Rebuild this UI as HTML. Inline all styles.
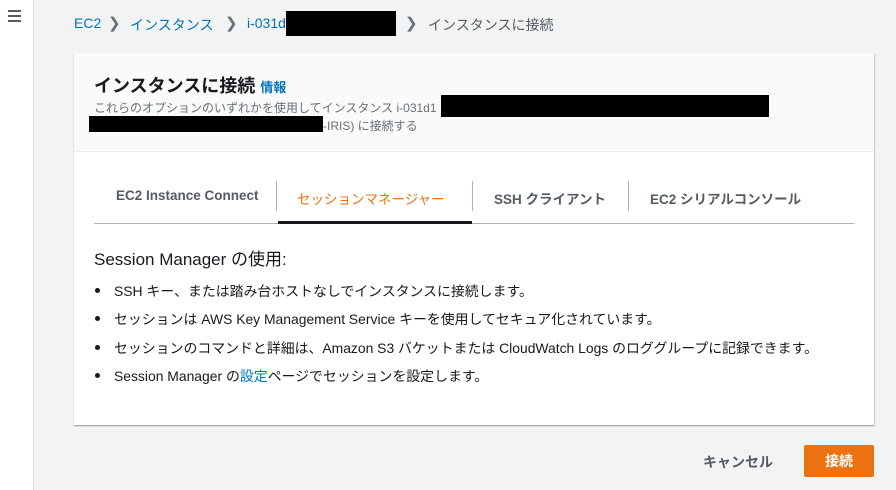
<!DOCTYPE html>
<html><head><meta charset="utf-8"><style>
*{box-sizing:border-box;margin:0;padding:0}
body{width:896px;height:490px;overflow:hidden;background:#f2f3f3;font-family:"Liberation Sans","Noto Sans CJK JP",sans-serif;position:relative;color:#16191f}
.side{position:absolute;left:0;top:0;width:34px;height:490px;background:#fff;border-right:1px solid #d5dbdb}
.ham{position:absolute;left:8px;top:10px;width:13px}
.ham i{display:block;height:2px;background:#545b64;margin-bottom:3px}
.abs{position:absolute;white-space:nowrap}
.bc{top:15px;font-size:14px;color:#0073bb}
.sep{color:#687078;font-size:15px}
.blk{position:absolute;background:#000}
.card{position:absolute;left:74px;top:53px;width:800px;height:372px;background:#fff;box-shadow:0 1px 1px rgba(0,28,36,.3),1px 1px 1px rgba(0,28,36,.15)}
.hd{position:absolute;left:0;top:0;width:800px;height:99px;background:#fafafa;border-bottom:1px solid #eaeded}
.tab{position:absolute;top:188px;font-size:13.5px;font-weight:bold;color:#545b64}
.vs{position:absolute;top:181px;width:1px;height:30px;background:#aab7b8}
li{list-style:none;position:absolute;left:95px;font-size:13.9px;color:#16191f;white-space:nowrap}
li:before{content:"";position:absolute;left:0;top:7px;width:5px;height:5px;border-radius:50%;background:#16191f}
li span.t{margin-left:19px}
</style></head><body>
<div class="side"><div class="ham"><i></i><i></i><i></i></div></div>
<div class="abs bc" style="left:74px">EC2</div>
<div class="abs sep" style="left:108px;top:14px">&#x276F;</div>
<div class="abs bc" style="left:130px">インスタンス</div>
<div class="abs sep" style="left:225px;top:14px">&#x276F;</div>
<div class="abs bc" style="left:247px">i-031d</div>
<div class="blk" style="left:286px;top:11px;width:110px;height:25px"></div>
<div class="abs sep" style="left:405px;top:14px">&#x276F;</div>
<div class="abs" style="left:428px;top:15px;font-size:14px;color:#545b64">インスタンスに接続</div>
<div class="card">
<div class="hd"></div>
</div>
<div class="abs" style="left:94px;top:72px;font-size:18px;font-weight:bold">インスタンスに接続 <span style="font-size:13px;color:#0073bb">情報</span></div>
<div class="abs" style="left:94px;top:99px;font-size:12px;color:#687078">これらのオプションのいずれかを使用してインスタンス i-031d1</div>
<div class="blk" style="left:441px;top:95px;width:328px;height:22px"></div>
<div class="blk" style="left:89px;top:116px;width:234px;height:16px"></div>
<div class="abs" style="left:323px;top:117px;font-size:12px;color:#687078">-IRIS) に接続する</div>
<div class="tab" style="left:116px">EC2 Instance Connect</div>
<div class="vs" style="left:276px"></div>
<div class="tab" style="left:297px;color:#ec7211;font-weight:normal">セッションマネージャー</div>
<div class="vs" style="left:472px"></div>
<div class="tab" style="left:494px">SSH クライアント</div>
<div class="vs" style="left:628px"></div>
<div class="tab" style="left:650px">EC2 シリアルコンソール</div>
<div style="position:absolute;left:94px;top:223px;width:760px;height:1px;background:#aab7b8"></div>
<div style="position:absolute;left:278px;top:221px;width:194px;height:3px;background:#16191f"></div>
<div class="abs" style="left:94px;top:245px;font-size:17px">Session Manager の使用:</div>
<ul>
<li style="top:281px"><span class="t">SSH キー、または踏み台ホストなしでインスタンスに接続します。</span></li>
<li style="top:309px"><span class="t">セッションは AWS Key Management Service キーを使用してセキュア化されています。</span></li>
<li style="top:338px"><span class="t">セッションのコマンドと詳細は、Amazon S3 バケットまたは CloudWatch Logs のロググループに記録できます。</span></li>
<li style="top:366px"><span class="t">Session Manager の<span style="color:#0073bb">設定</span>ページでセッションを設定します。</span></li>
</ul>
<div class="abs" style="left:703px;top:452px;font-size:14px;font-weight:bold;color:#545b64">キャンセル</div>
<div style="position:absolute;left:804px;top:445px;width:70px;height:32px;background:#ec7211;border-radius:2px;color:#fff;font-size:14px;font-weight:bold;text-align:center;line-height:32px">接続</div>
</body></html>
